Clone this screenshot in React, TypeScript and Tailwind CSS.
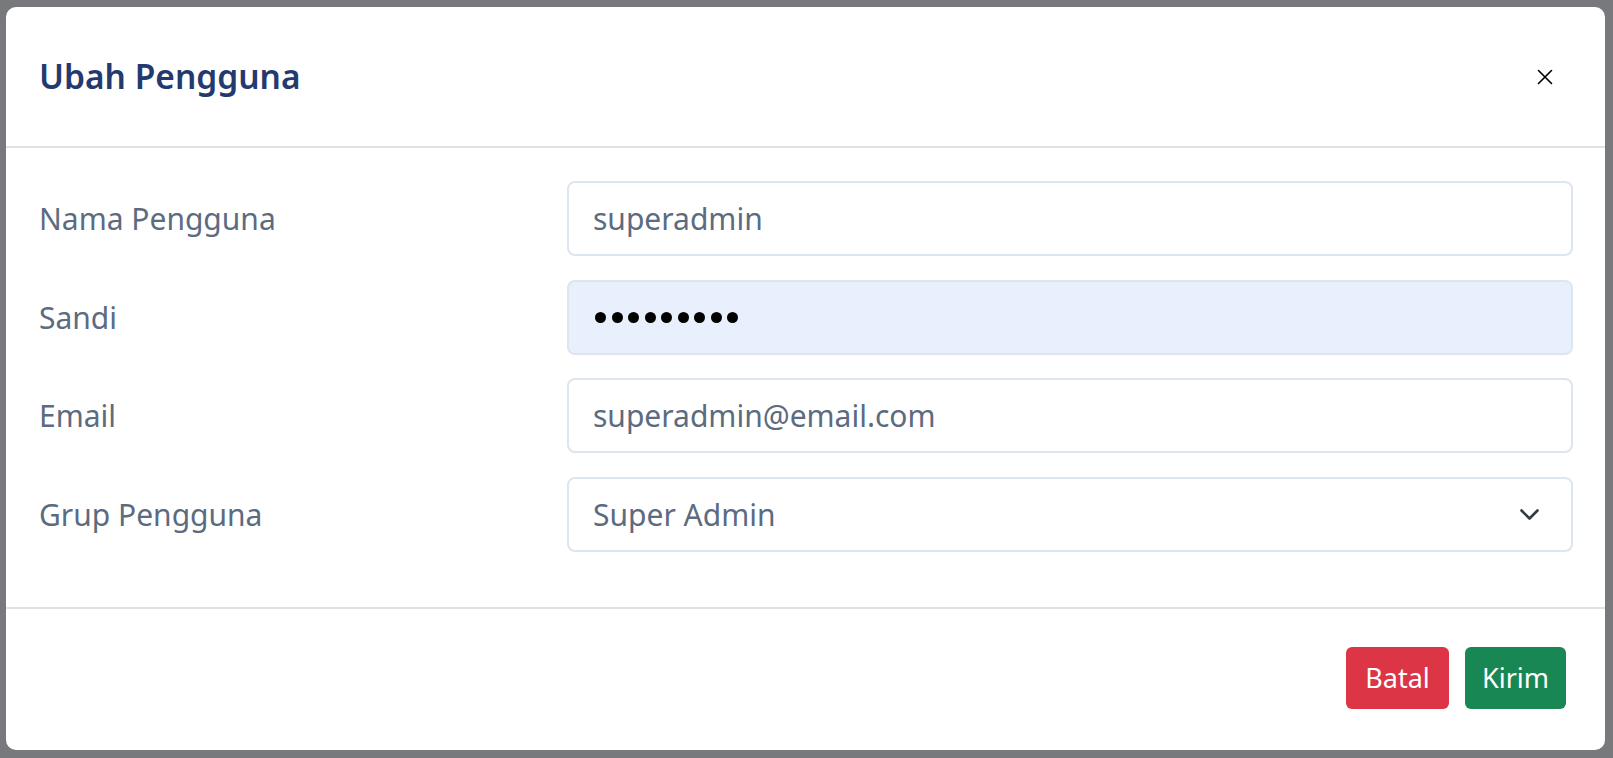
import React from "react";

const font = { fontFamily: "'Noto Sans', 'Open Sans', sans-serif" };

function Row({ label, children }: { label: string; children: React.ReactNode }) {
  return (
    <div className="flex items-center mb-[23.5px]">
      <div className="w-[528px] shrink-0 text-[30px] text-[#5b6b80]">{label}</div>
      <div className="flex-1">{children}</div>
    </div>
  );
}

export default function App() {
  return (
    <div className="w-[1613px] h-[758px] bg-[#78797d] pt-[7px] pl-[6px]" style={font}>
      <div className="w-[1599px] h-[743px] bg-white rounded-[10px] flex flex-col overflow-hidden">
        <div className="h-[141px] shrink-0 border-b-2 border-[#dee2e6] flex items-center justify-between pl-[33px] pr-[52px]">
          <h5 className="text-[33.5px] font-semibold text-[#243a6f]">Ubah Pengguna</h5>
          <svg width="16" height="16" viewBox="0 0 16 16" fill="none" stroke="#000" strokeWidth="1.6" strokeLinecap="round">
            <path d="M1.5 1.5 L14.5 14.5 M14.5 1.5 L1.5 14.5" />
          </svg>
        </div>
        <div className="pt-[33px] pb-[55px] pl-[33px] pr-[32px] flex flex-col">
          <Row label="Nama Pengguna">
            <div className="h-[75px] rounded-[8px] border-2 border-[#dde5f0] flex items-center pl-[24px] text-[30px] text-[#5b6b80]">
              superadmin
            </div>
          </Row>
          <Row label="Sandi">
            <div className="h-[75px] rounded-[8px] border-2 border-[#dde5f0] bg-[#e8f0fe] flex items-center pl-[26px] gap-[5.5px]">
              {Array.from({ length: 9 }).map((_, i) => (
                <div key={i} className="w-[11px] h-[11px] rounded-full bg-black" />
              ))}
            </div>
          </Row>
          <Row label="Email">
            <div className="h-[75px] rounded-[8px] border-2 border-[#dde5f0] flex items-center pl-[24px] text-[30px] text-[#5b6b80]">
              superadmin@email.com
            </div>
          </Row>
          <div className="flex items-center">
            <div className="w-[528px] shrink-0 text-[30px] text-[#5b6b80]">Grup Pengguna</div>
            <div className="flex-1 h-[75px] rounded-[8px] border-2 border-[#dde5f0] flex items-center justify-between pl-[24px] pr-[32px] text-[30px] text-[#5b6b80]">
              <span>Super Admin</span>
              <svg width="19" height="11" viewBox="0 0 19 11" fill="none" stroke="#343a40" strokeWidth="2.6" strokeLinecap="round" strokeLinejoin="round">
                <path d="M1.5 1.5 L9.5 9.5 L17.5 1.5" />
              </svg>
            </div>
          </div>
        </div>
        <div className="border-t-2 border-[#dee2e6] flex-1 flex items-center justify-end gap-[16px] pr-[39px] pb-[2px]">
          <button className="h-[62px] w-[103px] rounded-[6px] bg-[#dc3545] text-white text-[27px]">Batal</button>
          <button className="h-[62px] w-[101px] rounded-[6px] bg-[#198754] text-white text-[27px]">Kirim</button>
        </div>
      </div>
    </div>
  );
}
